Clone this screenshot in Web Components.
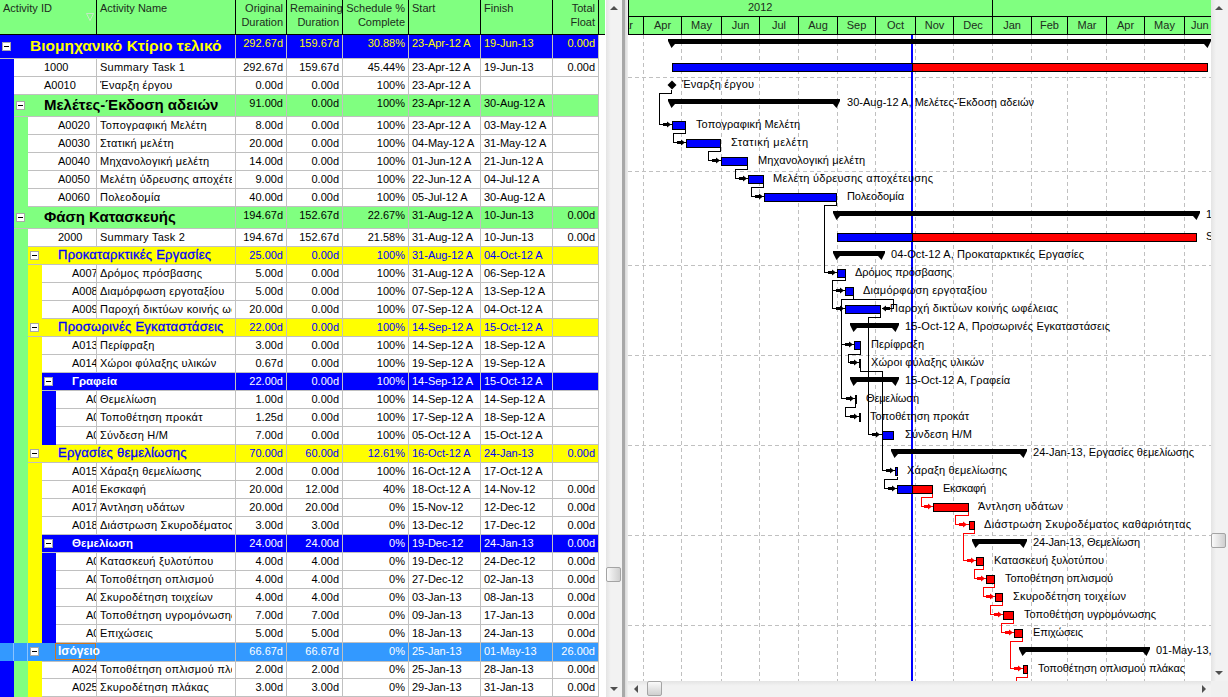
<!DOCTYPE html>
<html lang="el">
<head>
<meta charset="utf-8">
<title>Gantt</title>
<style>
  html,body{margin:0;padding:0;background:#fff;overflow:hidden}
  body{width:1228px;height:697px;font:11px "Liberation Sans",Arial,sans-serif;color:#000}
</style>
</head>
<body>
<schedule-app>
  <activity-header slot="left"></activity-header>
  <activity-row slot="left" h="24" cells="292.67d|159.67d|30.88%|23-Apr-12 A|19-Jun-13|0.00d" group>Βιομηχανικό Κτίριο τελικό</activity-row>
  <activity-row slot="left" bands="b" code="1000" cells="292.67d|159.67d|45.44%|23-Apr-12 A|19-Jun-13|0.00d">Summary Task 1</activity-row>
  <activity-row slot="left" bands="b" code="A0010" cells="0.00d|0.00d|100%|23-Apr-12 A||">Έναρξη έργου</activity-row>
  <activity-row slot="left" h="22" bands="b" cells="91.00d|0.00d|100%|23-Apr-12 A|30-Aug-12 A|" group>Μελέτες-Έκδοση αδειών</activity-row>
  <activity-row slot="left" bands="bg" code="A0020" cells="8.00d|0.00d|100%|23-Apr-12 A|03-May-12 A|">Τοπογραφική Μελέτη</activity-row>
  <activity-row slot="left" bands="bg" code="A0030" cells="20.00d|0.00d|100%|04-May-12 A|31-May-12 A|">Στατική μελέτη</activity-row>
  <activity-row slot="left" bands="bg" code="A0040" cells="14.00d|0.00d|100%|01-Jun-12 A|21-Jun-12 A|">Μηχανολογική μελέτη</activity-row>
  <activity-row slot="left" bands="bg" code="A0050" cells="9.00d|0.00d|100%|22-Jun-12 A|04-Jul-12 A|">Μελέτη ύδρευσης αποχέτευσης</activity-row>
  <activity-row slot="left" bands="bg" code="A0060" cells="40.00d|0.00d|100%|05-Jul-12 A|30-Aug-12 A|">Πολεοδομία</activity-row>
  <activity-row slot="left" h="22" bands="b" cells="194.67d|152.67d|22.67%|31-Aug-12 A|10-Jun-13|0.00d" group>Φάση Κατασκευής</activity-row>
  <activity-row slot="left" bands="bg" code="2000" cells="194.67d|152.67d|21.58%|31-Aug-12 A|10-Jun-13|0.00d">Summary Task 2</activity-row>
  <activity-row slot="left" bands="bg" cells="25.00d|0.00d|100%|31-Aug-12 A|04-Oct-12 A|" group>Προκαταρκτικές Εργασίες</activity-row>
  <activity-row slot="left" bands="bgy" code="A007" cells="5.00d|0.00d|100%|31-Aug-12 A|06-Sep-12 A|">Δρόμος πρόσβασης</activity-row>
  <activity-row slot="left" bands="bgy" code="A008" cells="5.00d|0.00d|100%|07-Sep-12 A|13-Sep-12 A|">Διαμόρφωση εργοταξίου</activity-row>
  <activity-row slot="left" bands="bgy" code="A009" cells="20.00d|0.00d|100%|07-Sep-12 A|04-Oct-12 A|">Παροχή δικτύων κοινής ωφέλειας</activity-row>
  <activity-row slot="left" bands="bg" cells="22.00d|0.00d|100%|14-Sep-12 A|15-Oct-12 A|" group>Προσωρινές Εγκαταστάσεις</activity-row>
  <activity-row slot="left" bands="bgy" code="A013" cells="3.00d|0.00d|100%|14-Sep-12 A|18-Sep-12 A|">Περίφραξη</activity-row>
  <activity-row slot="left" bands="bgy" code="A014" cells="0.67d|0.00d|100%|19-Sep-12 A|19-Sep-12 A|">Χώροι φύλαξης υλικών</activity-row>
  <activity-row slot="left" bands="bgy" cells="22.00d|0.00d|100%|14-Sep-12 A|15-Oct-12 A|" group>Γραφεία</activity-row>
  <activity-row slot="left" bands="bgyb" code="A0" cells="1.00d|0.00d|100%|14-Sep-12 A|14-Sep-12 A|">Θεμελίωση</activity-row>
  <activity-row slot="left" bands="bgyb" code="A0" cells="1.25d|0.00d|100%|17-Sep-12 A|18-Sep-12 A|">Τοποθέτηση προκάτ</activity-row>
  <activity-row slot="left" bands="bgyb" code="A0" cells="7.00d|0.00d|100%|05-Oct-12 A|15-Oct-12 A|">Σύνδεση Η/Μ</activity-row>
  <activity-row slot="left" bands="bg" cells="70.00d|60.00d|12.61%|16-Oct-12 A|24-Jan-13|0.00d" group>Εργασίες θεμελίωσης</activity-row>
  <activity-row slot="left" bands="bgy" code="A015" cells="2.00d|0.00d|100%|16-Oct-12 A|17-Oct-12 A|">Χάραξη θεμελίωσης</activity-row>
  <activity-row slot="left" bands="bgy" code="A016" cells="20.00d|12.00d|40%|18-Oct-12 A|14-Nov-12|0.00d">Εκσκαφή</activity-row>
  <activity-row slot="left" bands="bgy" code="A017" cells="20.00d|20.00d|0%|15-Nov-12|12-Dec-12|0.00d">Άντληση υδάτων</activity-row>
  <activity-row slot="left" bands="bgy" code="A018" cells="3.00d|3.00d|0%|13-Dec-12|17-Dec-12|0.00d">Διάστρωση Σκυροδέματος καθαριότητας</activity-row>
  <activity-row slot="left" bands="bgy" cells="24.00d|24.00d|0%|19-Dec-12|24-Jan-13|0.00d" group>Θεμελίωση</activity-row>
  <activity-row slot="left" bands="bgyb" code="A0" cells="4.00d|4.00d|0%|19-Dec-12|24-Dec-12|0.00d">Κατασκευή ξυλοτύπου</activity-row>
  <activity-row slot="left" bands="bgyb" code="A0" cells="4.00d|4.00d|0%|27-Dec-12|02-Jan-13|0.00d">Τοποθέτηση οπλισμού</activity-row>
  <activity-row slot="left" bands="bgyb" code="A0" cells="4.00d|4.00d|0%|03-Jan-13|08-Jan-13|0.00d">Σκυροδέτηση τοιχείων</activity-row>
  <activity-row slot="left" bands="bgyb" code="A0" cells="7.00d|7.00d|0%|09-Jan-13|17-Jan-13|0.00d">Τοποθέτηση υγρομόνωσης</activity-row>
  <activity-row slot="left" bands="bgyb" code="A0" cells="5.00d|5.00d|0%|18-Jan-13|24-Jan-13|0.00d">Επιχώσεις</activity-row>
  <activity-row slot="left" bands="bg" cells="66.67d|66.67d|0%|25-Jan-13|01-May-13|26.00d" group selected>Ισόγειο</activity-row>
  <activity-row slot="left" bands="bgy" code="A024" cells="2.00d|2.00d|0%|25-Jan-13|28-Jan-13|0.00d">Τοποθέτηση οπλισμού πλάκας</activity-row>
  <activity-row slot="left" bands="bgy" code="A025" cells="3.00d|3.00d|0%|29-Jan-13|31-Jan-13|0.00d">Σκυροδέτηση πλάκας</activity-row>
  <gantt-chart slot="right"></gantt-chart>
</schedule-app>

<script>
const COLUMNS = '97px 139px 51px 56px 66px 72px 72px 46px';
const BAND = {b:'#0000ff', g:'#80ff80', y:'#ffff00'};

class ScheduleApp extends HTMLElement {
    constructor(){
        super();
        this.attachShadow({mode:'open'});
        this.shadowRoot.innerHTML = `
        <style>
        :host{display:flex;width:1228px;height:697px;overflow:hidden;background:#fff}
        .left{width:606px;height:697px;overflow:hidden;flex:none}
        .splitter{width:6px;flex:none;background:linear-gradient(90deg,#a8a8a8 0,#a8a8a8 3px,#d8d8d8 3px,#f0f0f0 100%)}
        .right{width:600px;flex:none;display:flex;flex-direction:column;height:697px}
        .upper{display:flex;height:681px}
        .chart{width:583px;flex:none;height:681px;overflow:hidden}
        .lower{display:flex;height:16px}
        .corner{width:17px;background:#f0f0f0}
        </style>
        <div class="left"><slot name="left"></slot></div>
        <fake-scrollbar length="697" thumb="567" size="15"></fake-scrollbar>
        <div class="splitter"></div>
        <div class="right">
            <div class="upper">
                <div class="chart"><slot name="right"></slot></div>
                <fake-scrollbar length="681" thumb="533" size="15" breadth="17"></fake-scrollbar>
            </div>
            <div class="lower">
                <fake-scrollbar horizontal length="583" thumb="3" size="15"></fake-scrollbar>
                <div class="corner"></div>
            </div>
        </div>`;
    }
}

class FakeScrollbar extends HTMLElement {
    constructor(){
        super();
        this.attachShadow({mode:'open'});
    }
    connectedCallback(){
        const hor = this.hasAttribute('horizontal');
        const len = this.getAttribute('length');
        const thumb = this.getAttribute('thumb');
        const size = this.getAttribute('size');
        const breadth = this.getAttribute('breadth') || 16;
        const arrows = hor
            ? ['M6 8 L10 4 L10 12 Z','M7 4 L11 8 L7 12 Z']
            : ['M4 10 L8 6 L12 10 Z','M4 6 L12 6 L8 10 Z'];
        const offset = hor ? `margin-left:${thumb}px;width:${size}px;height:15px` : `margin-top:${thumb-16}px;height:${size}px;width:15px`;
        this.shadowRoot.innerHTML = `
        <style>
        :host{display:flex;flex:none;flex-direction:${hor?'row':'column'};${hor?`width:${len}px;height:16px`:`width:${breadth}px;height:${len}px`};
            background:${hor?'linear-gradient(#e4e4e4,#f2f2f2 30%)':'linear-gradient(90deg,#e4e4e4,#f2f2f2 30%)'}}
        svg{width:16px;height:16px;flex:none;display:block}
        .track{flex:1;min-width:0;min-height:0;overflow:hidden}
        .thumb{box-sizing:border-box;border:1px solid #a4a4a4;border-radius:2px;
            background:${hor?'linear-gradient(#fafafa,#cfcfcf)':'linear-gradient(90deg,#fafafa,#cfcfcf)'}}
        </style>
        <svg viewBox="0 0 16 16"><path d="${arrows[0]}" fill="#505050"/></svg>
        <div class="track"><div class="thumb" style="${offset}"></div></div>
        <svg viewBox="0 0 16 16"><path d="${arrows[1]}" fill="#505050"/></svg>`;
    }
}

class ActivityHeader extends HTMLElement {
    constructor(){
        super();
        this.attachShadow({mode:'open'});
        const cells = [
            ['Activity ID','l'],['Activity Name','l'],['Original<br>Duration','r'],['Remaining<br>Duration','r'],
            ['Schedule %<br>Complete','r'],['Start','l'],['Finish','l'],['Total<br>Float','r']
        ];
        this.shadowRoot.innerHTML = `
        <style>
        :host{display:block;width:606px;height:35px;background:linear-gradient(90deg,#80ff80 605px,#fff 605px);position:relative}
        .grid{display:grid;grid-template-columns:${COLUMNS};width:605px;height:35px;border-bottom:1px solid #000;box-sizing:border-box}
        .c{box-sizing:border-box;border-right:1px solid #000;height:34px;padding:1px 3px 0;line-height:14px;color:#1c2c1c;white-space:nowrap;overflow:hidden}
        .r{text-align:right}
        svg{position:absolute;left:86px;top:13px}
        </style>
        <div class="grid">
            ${cells.map(c=>`<div class="c ${c[1]}">${c[0]}</div>`).join('')}
        </div>
        <svg width="8" height="8" viewBox="0 0 8 8"><path d="M.5 .5 H7.5 L4 7.5 Z" fill="none" stroke="#c4e8c4"/></svg>`;
    }
}

class ActivityRow extends HTMLElement {
    constructor(){
        super();
        this.attachShadow({mode:'open'});
    }
    getStyles(h, skin, depth){
        return `
        <style>
        :host{display:block;width:599px;height:${h}px;color:${skin.fg};white-space:nowrap}
        .row{display:grid;grid-template-columns:${COLUMNS};height:${h}px;background:${skin.bg}}
        .c{box-sizing:border-box;border-right:1px solid #c0c0c0;border-bottom:1px solid #c0c0c0;padding:0 3px;line-height:16px;overflow:hidden}
        .r{text-align:right}
        .lead{display:flex;border:0;padding:0;overflow:visible;min-width:0}
        .lead.task{grid-column:1}
        .lead.group{grid-column:1 / 3}
        .band{width:14px;flex:none;box-sizing:border-box}
        .band.sel{border-right:1px solid #8cc4ff}
        .code{flex:1;min-width:0;padding:0 0 0 30px}
        .clip{overflow:hidden;letter-spacing:.25px}
        .title{flex:1;min-width:0;display:flex;align-items:center;padding:0 0 1px 2px;overflow:visible}
        .box{box-sizing:border-box;width:9px;height:9px;flex:none;background:#fff;border:1px solid #a8a8a8;display:flex;align-items:center;justify-content:center;margin-right:19px}
        .box::after{content:"";width:5px;height:1px;background:#000}
        .text{font-weight:${[700,700,400,700][depth]};font-size:${[15.5,15,13,11.5][depth]}px;line-height:${h-2}px}
        .d2{letter-spacing:.25px;-webkit-text-stroke:.3px #0000ff}
        .focus{margin-left:-3px;padding-left:2px;box-sizing:border-box;width:41px;height:17px;line-height:15px;border:1px solid #d07820;overflow:visible;font-weight:700;font-size:12px;flex:none;align-self:flex-start}
        </style>`;
    }
    render(){
        const bands = (this.getAttribute('bands')||'').split('').filter(Boolean);
        const depth = bands.length;
        const h = +(this.getAttribute('h')||18);
        const group = this.hasAttribute('group');
        const selected = this.hasAttribute('selected');
        const vals = this.getAttribute('cells').split('|');
        const skins = [
            {bg:'#0000ff',fg:'#ffff00'},{bg:'#80ff80',fg:'#000'},{bg:'#ffff00',fg:'#0000ff'},{bg:'#0000ff',fg:'#fff'}
        ];
        let skin = group ? skins[depth] : {bg:'#fff',fg:'#000'};
        if (selected) skin = {bg:'#3399ff',fg:'#fff'};
        const bandHtml = bands.map(b=> selected ? '<div class="band sel"></div>' : `<div class="band" style="background:${BAND[b]}"></div>`).join('');
        const titleText = selected
            ? '<span class="focus"><slot></slot></span>'
            : `<span class="text ${depth===2?'d2':''}"><slot></slot></span>`;
        const lead = group
            ? `<div class="lead group">${bandHtml}<div class="c title"><span class="box"></span>${titleText}</div></div>`
            : `<div class="lead task">${bandHtml}<div class="c code">${this.getAttribute('code')}</div></div><div class="c"><div class="clip"><slot></slot></div></div>`;
        this.shadowRoot.innerHTML = `${this.getStyles(h, skin, depth)}
        <div class="row">
            ${lead}
            <div class="c r">${vals[0]}</div>
            <div class="c r">${vals[1]}</div>
            <div class="c r">${vals[2]}</div>
            <div class="c">${vals[3]}</div>
            <div class="c">${vals[4]}</div>
            <div class="c r">${vals[5]}</div>
        </div>`;
    }
    connectedCallback(){
        this.render();
    }
}

class GanttChart extends HTMLElement {
    constructor(){
        super();
        this.attachShadow({mode:'open'});
    }
    // months: label, left, right
    getMonths(){
        const t = [628,644,682,722,760,799,838,876,916,954,993,1032,1068,1107,1145,1185,1211];
        const n = ['Mar','Apr','May','Jun','Jul','Aug','Sep','Oct','Nov','Dec','Jan','Feb','Mar','Apr','May','Jun'];
        return n.map((m,i)=>[m,t[i],t[i+1]]);
    }
    getHeader(){
        const months = this.getMonths().map((m,i,a)=>{
            const w = m[2]-m[1];
            let cls = '';
            if (i===0) cls = 'first';
            if (i===a.length-1) cls = 'last';
            return `<div class="m ${cls}" style="width:${w}px"><span>${m[0]}</span></div>`;
        }).join('');
        return `
        <div class="years">
            <div class="y2012">2012</div>
            <div class="y2013"></div>
        </div>
        <div class="months">${months}</div>`;
    }
    summary(x1,x2,y){
        return `<path d="M${x1} ${y} H${x2} V${y+2} L${x2-3.5} ${y+9} L${x2-7} ${y+5} H${x1+7} L${x1+3.5} ${y+9} L${x1} ${y+2} Z" fill="#000"/>`;
    }
    bar(x1,x2,c,fill){
        return `<rect x="${x1+.5}" y="${c-3.5}" width="${x2-x1-1}" height="8" fill="${fill}" stroke="#000"/>`;
    }
    arrow(tip,y,color,left){
        const s = left ? 1 : -1;
        return `<path d="M${tip+s*9} ${y-1} H${tip+s*5} V${y-2.5} L${tip+s*1} ${y+.5} L${tip+s*5} ${y+3.5} V${y+2} H${tip+s*9} Z" fill="${color}"/>`;
    }
    getSvg(){
        const ticks = [643,681,721,759,798,837,875,915,953,992,1031,1067,1106,1144,1184];
        const hlines = [76,170,264,354,444,534,624];
        let grid = '';
        ticks.forEach(x=>{ grid += `<line x1="${x+.5}" y1="34" x2="${x+.5}" y2="681"/>`; });
        hlines.forEach(y=>{ grid += `<line x1="628" y1="${y+.5}" x2="1211" y2="${y+.5}"/>`; });

        const black = [
            'M671 88 V92 H659 V123 H672',
            'M685 128 V132 H673 V141 H686',
            'M720 146 V150 H708 V159 H721',
            'M747 164 V168 H735 V177 H748',
            'M763 182 V186 H751 V195 H764',
            'M836 200 V204 H824 V271 H837',
            'M845 276 V279 H832 V307 H845',
            'M832 289 H845',
            'M853 294 V298 H841 V397 H855',
            'M841 343 H854',
            'M853 298 H893 V307 H881',
            'M880 312 V316 H868 V433 H881',
            'M860 348 V353 H848 V361 H859',
            'M860 366 V370 H882 V469 H895',
            'M855 402 V406 H845 V415 H859',
            'M897 475 V478 H884 V487 H897'
        ];
        const red = [
            'M932 492 V496 H921 V505 H933',
            'M968 510 V514 H955 V523 H968',
            'M974 528 V532 H963 V559 H976',
            'M983 564 V568 H974 V577 H986',
            'M994 582 V586 H983 V595 H995',
            'M1002 600 V604 H990 V613 H1003',
            'M1013 618 V622 H1001 V631 H1014',
            'M1022 636 V640 H1010 V667 H1023',
            'M1027 672 V676 H1016 V681'
        ];
        const blackArrows = [[672,123],[686,141],[721,159],[748,177],[764,195],[837,271],[845,289],[845,307],[854,343],[859,361],[855,397],[859,415],[881,433],[895,469],[897,487]];
        const redArrows = [[933,505],[968,523],[976,559],[986,577],[995,595],[1003,613],[1014,631],[1023,667]];

        const bars = [
            this.summary(668,1211,38), this.summary(668,840,98), this.summary(833,1200,210),
            this.summary(833,885,250), this.summary(850,899,322), this.summary(850,899,376),
            this.summary(891,1027,448), this.summary(972,1027,538), this.summary(1019,1150,646),
            this.bar(672,913,66,'#0000ff'), this.bar(912,1208,66,'#ff0000'),
            `<path d="M672 79.5 L676.5 84 L672 88.5 L667.5 84 Z" fill="#000"/>`,
            this.bar(672,686,124,'#0000ff'), this.bar(686,721,142,'#0000ff'), this.bar(721,748,160,'#0000ff'),
            this.bar(748,764,178,'#0000ff'), this.bar(764,837,196,'#0000ff'),
            this.bar(837,913,236,'#0000ff'), this.bar(912,1197,236,'#ff0000'),
            this.bar(837,846,272,'#0000ff'), this.bar(845,854,290,'#0000ff'), this.bar(845,881,308,'#0000ff'),
            this.bar(854,861,344,'#0000ff'), this.bar(859,861,362,'#000'),
            this.bar(855,857,398,'#000'), this.bar(859,861,416,'#000'),
            this.bar(882,894,434,'#0000ff'), this.bar(895,898,470,'#0000ff'),
            this.bar(897,913,488,'#0000ff'), this.bar(912,933,488,'#ff0000'),
            this.bar(933,969,506,'#ff0000'), this.bar(969,975,524,'#ff0000'),
            this.bar(976,984,560,'#ff0000'), this.bar(986,995,578,'#ff0000'), this.bar(995,1003,596,'#ff0000'),
            this.bar(1003,1014,614,'#ff0000'), this.bar(1014,1023,632,'#ff0000'), this.bar(1023,1028,668,'#ff0000')
        ].join('');

        // x, baseline, text, right end of the text
        const labels = [
            [682,87,'Έναρξη έργου',754],[847,105,'30-Aug-12 A, Μελέτες-Έκδοση αδειών',1034],
            [696,127,'Τοπογραφική Μελέτη',800],[731,145,'Στατική μελέτη',808],[758,163,'Μηχανολογική μελέτη',865],
            [773,181,'Μελέτη ύδρευσης αποχέτευσης',933],[847,199,'Πολεοδομία',904],[1206,217,'10-Jun-13'],[1206,239,'Summary Task 2'],
            [891,257,'04-Oct-12 A, Προκαταρκτικές Εργασίες',1084],[855,275,'Δρόμος πρόσβασης',952],[863,293,'Διαμόρφωση εργοταξίου',987],
            [890,311,'Παροχή δικτύων κοινής ωφέλειας',1058],[905,329,'15-Oct-12 A, Προσωρινές Εγκαταστάσεις',1110],
            [871,347,'Περίφραξη',924],[871,365,'Χώροι φύλαξης υλικών',984],[905,383,'15-Oct-12 A, Γραφεία',1010],
            [866,401,'Θεμελίωση',919],[870,419,'Τοποθέτηση προκάτ',969],[905,437,'Σύνδεση Η/Μ',972],
            [1033,455,'24-Jan-13, Εργασίες θεμελίωσης',1194],[907,473,'Χάραξη θεμελίωσης',1007],[943,491,'Εκσκαφή',986],
            [978,509,'Άντληση υδάτων',1063],[984,527,'Διάστρωση Σκυροδέματος καθαριότητας',1191],[1033,545,'24-Jan-13, Θεμελίωση',1140],
            [994,563,'Κατασκευή ξυλοτύπου',1104],[1005,581,'Τοποθέτηση οπλισμού',1113],[1013,599,'Σκυροδέτηση τοιχείων',1126],
            [1024,617,'Τοποθέτηση υγρομόνωσης',1156],[1033,635,'Επιχώσεις',1083],[1156,653,'01-May-13, Ισόγειο'],[1038,671,'Τοποθέτηση οπλισμού πλάκας',1185]
        ].map(l=>`<text x="${l[0]}" y="${l[1]}"${l[3]?` textLength="${l[3]-l[0]}"`:''}>${l[2]}</text>`).join('');

        return `
        <svg width="583" height="647" viewBox="628 34 583 647">
            <g stroke="#c0c0c0" stroke-dasharray="4 3" shape-rendering="crispEdges">${grid}</g>
            <rect x="911" y="34" width="2" height="647" fill="#0000ff"/>
            <g transform="translate(.5 .5)" fill="none" stroke="#000" shape-rendering="crispEdges">${black.map(d=>`<path d="${d}"/>`).join('')}</g>
            <g transform="translate(.5 .5)" fill="none" stroke="#ff0000" shape-rendering="crispEdges">${red.map(d=>`<path d="${d}"/>`).join('')}</g>
            ${blackArrows.map(a=>this.arrow(a[0],a[1],'#000')).join('')}
            ${this.arrow(881,307,'#000',true)}
            ${redArrows.map(a=>this.arrow(a[0],a[1],'#ff0000')).join('')}
            ${bars}
            <g font-family="'Liberation Sans',Arial,sans-serif" font-size="11" fill="#000">${labels}</g>
        </svg>`;
    }
    getStyles(){
        return `
        <style>
        :host{display:block;width:583px;height:681px;background:#fff;overflow:hidden;color:#1c2c1c}
        .years{display:flex;height:17px;background:#80ff80;border-left:1px solid #000;box-sizing:border-box;border-bottom:1px solid #000}
        .y2012{width:364px;box-sizing:border-box;border-right:1px solid #000;padding-left:119px;line-height:15px}
        .y2013{flex:1}
        .months{display:flex;height:18px;background:#80ff80;border-bottom:1px solid #000;box-sizing:border-box}
        .m{box-sizing:border-box;border-right:1px solid #000;flex:none;display:flex;justify-content:center;line-height:16px;overflow:hidden}
        .m.first{justify-content:flex-end;border-left:1px solid #000;padding-right:10px}
        .m.last{justify-content:flex-start;padding-left:6px;border-right:0}
        .m span{flex:none}
        svg{display:block}
        </style>`;
    }
    connectedCallback(){
        this.shadowRoot.innerHTML = this.getStyles() + this.getHeader() + this.getSvg();
    }
}

customElements.define('fake-scrollbar', FakeScrollbar);
customElements.define('activity-header', ActivityHeader);
customElements.define('activity-row', ActivityRow);
customElements.define('gantt-chart', GanttChart);
customElements.define('schedule-app', ScheduleApp);
</script>
</body>
</html>
